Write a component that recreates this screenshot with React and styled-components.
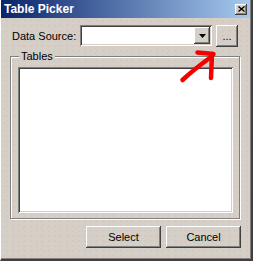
import React from 'react';
import styled, { createGlobalStyle, css } from 'styled-components';

const GlobalStyle = createGlobalStyle`
  html, body {
    margin: 0;
    padding: 0;
    background: #d4d0c8;
  }
  body {
    font-family: 'Liberation Sans', Arial, sans-serif;
  }
`;

const dither = css`
  background-color: #d4d0c8;
  background-image:
    radial-gradient(circle at 1px 1px, #e2b8b6 0.6px, transparent 0.8px),
    radial-gradient(circle at 1px 1px, #dcbdbb 0.6px, transparent 0.8px);
  background-size: 6px 5px, 9px 7px;
  background-position: 0 0, 4px 3px;
  background-attachment: fixed;
`;

const raised = css`
  box-shadow:
    inset -1px -1px #404040,
    inset 1px 1px #ffffff,
    inset -2px -2px #808080,
    inset 2px 2px #d4d0c8;
`;

const sunken = css`
  box-shadow:
    inset 1px 1px #808080,
    inset -1px -1px #ffffff,
    inset 2px 2px #404040,
    inset -2px -2px #d4d0c8;
`;

export default function App() {
  return (
    <>
      <GlobalStyle />
      <Window>
        <TitleBar>
          <Title>Table Picker</Title>
          <CloseButton aria-label="Close">
            <svg width="7" height="6" viewBox="0 0 7 6">
              <path d="M0.5 0.5 L6.5 5.5 M6.5 0.5 L0.5 5.5" stroke="#000" strokeWidth="1.4" />
            </svg>
          </CloseButton>
        </TitleBar>

        <Body>
          <Row>
            <Label>Data Source:</Label>
            <Combo>
              <ComboText />
              <DropButton>
                <svg width="7" height="4" viewBox="0 0 7 4">
                  <path d="M0 0 H7 L3.5 4 Z" fill="#000" />
                </svg>
              </DropButton>
            </Combo>
            <Button $w={22}>...</Button>
          </Row>

          <GroupBox>
            <Legend>Tables</Legend>
            <ListBox />
          </GroupBox>

          <Actions>
            <Button $w={75}>Select</Button>
            <Button $w={75}>Cancel</Button>
          </Actions>
        </Body>

        <Scribble width="44" height="36" viewBox="176 48 44 36">
          <g stroke="#f40000" strokeWidth="4.5" strokeLinecap="round" fill="none">
            <path d="M182.5 80 C190 73 200 65 211 57" />
            <path d="M197.5 52.5 L213.5 54" />
            <path d="M212 54 L211 78" />
          </g>
        </Scribble>
      </Window>
    </>
  );
}

const Window = styled.div`
  position: relative;
  box-sizing: border-box;
  width: 253px;
  height: 261px;
  display: flex;
  flex-direction: column;
  border-left: 1px solid #ffffff;
  border-right: 2px solid #404040;
  border-bottom: 2px solid #404040;
  box-shadow: inset -1px -1px #808080;
  ${dither};
`;

const TitleBar = styled.div`
  height: 18px;
  margin-right: 1px;
  display: flex;
  align-items: center;
  justify-content: space-between;
  padding: 0 3px 0 3px;
  background: linear-gradient(to right, #0a246a, #a6caf0);
`;

const Title = styled.span`
  color: #ffffff;
  font-weight: bold;
  font-size: 12px;
  line-height: 18px;
`;

const CloseButton = styled.div`
  box-sizing: border-box;
  width: 12px;
  height: 11px;
  display: flex;
  align-items: center;
  justify-content: center;
  background: #d4d0c8;
  ${raised};
`;

const Body = styled.div`
  flex: 1;
  display: flex;
  flex-direction: column;
  padding: 7px 10px 0 9px;
`;

const Row = styled.div`
  display: flex;
  align-items: center;
  height: 22px;
`;

const Label = styled.span`
  width: 68px;
  margin-left: 2px;
  font-size: 11px;
  color: #000;
`;

const Combo = styled.div`
  box-sizing: border-box;
  width: 132px;
  height: 21px;
  margin-right: 4px;
  margin-top: -1px;
  padding: 2px;
  display: flex;
  background: #ffffff;
  ${sunken};
`;

const ComboText = styled.div`
  flex: 1;
`;

const DropButton = styled.div`
  box-sizing: border-box;
  width: 16px;
  height: 17px;
  display: flex;
  align-items: center;
  justify-content: center;
  background: #d4d0c8;
  ${raised};
`;

const Button = styled.div`
  box-sizing: border-box;
  width: ${(p) => p.$w}px;
  height: 22px;
  display: flex;
  align-items: center;
  justify-content: center;
  font-size: 11px;
  color: #000;
  ${dither};
  ${raised};
`;

const GroupBox = styled.div`
  position: relative;
  box-sizing: border-box;
  height: 163px;
  margin-top: 9px;
  margin-right: 1px;
  display: flex;
  padding: 10px 6px 5px 7px;
  border: 1px solid #808080;
  box-shadow: inset 1px 1px #ffffff, 1px 1px #ffffff;
`;

const Legend = styled.span`
  position: absolute;
  left: 8px;
  top: -7px;
  padding: 0 2px;
  font-size: 11px;
  line-height: 13px;
  color: #000;
  ${dither};
`;

const ListBox = styled.div`
  flex: 1;
  background: #ffffff;
  ${sunken};
`;

const Actions = styled.div`
  display: flex;
  justify-content: flex-end;
  gap: 5px;
  margin-top: 7px;
`;

const Scribble = styled.svg`
  position: absolute;
  left: 175px;
  top: 48px;
  pointer-events: none;
`;
